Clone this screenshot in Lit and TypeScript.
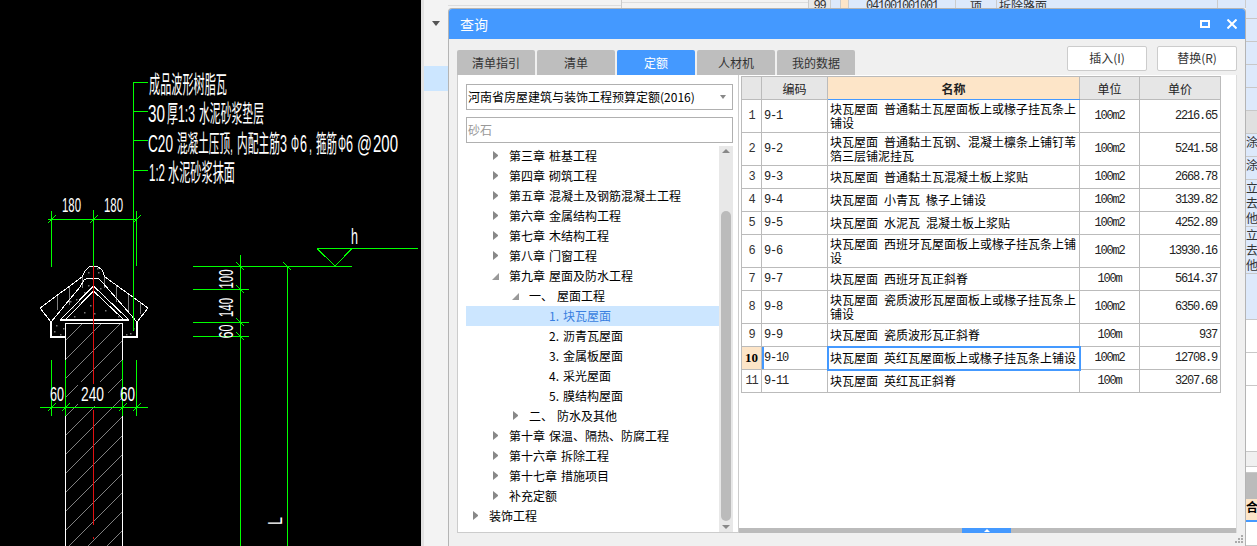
import { LitElement, html, svg, css } from 'lit';
import { customElement } from 'lit/decorators.js';

const GREEN = '#00ff00';

type Seg = [number, number, number, number];

const greenLines: Seg[] = [
  // leader
  [133.5, 82, 133.5, 331], [133.5, 82.5, 148, 82.5], [133.5, 111.5, 148, 111.5],
  [133.5, 140.5, 148, 140.5], [133.5, 170.5, 148, 170.5],
  // top dimension
  [48, 219.5, 137, 219.5], [51.5, 211, 51.5, 267], [93.5, 210, 93.5, 266], [136.5, 211, 136.5, 266],
  // bottom dimension
  [40, 407.5, 148, 407.5], [51.5, 360, 51.5, 416], [65.5, 360, 65.5, 416],
  [122.5, 360, 122.5, 416], [136.5, 360, 136.5, 416],
  // elevation lines
  [193, 266.5, 352, 266.5], [193, 289.5, 249, 289.5], [193, 322.5, 249, 322.5], [193, 336.5, 249, 336.5],
  [240.5, 255, 240.5, 546], [287.5, 266, 287.5, 546],
  [317, 248.5, 418, 248.5], [317, 248.5, 335, 266], [335, 266, 352, 248.5],
];

const slashTicks: [number, number][] = [[51.5, 219.5], [93.5, 219.5], [136.5, 219.5], [51.5, 407.5], [65.5, 407.5], [122.5, 407.5], [136.5, 407.5]];
const backTicks: [number, number][] = [[240.5, 266.5], [240.5, 289.5], [240.5, 322.5], [240.5, 336.5], [287.5, 266.5]];

const tileStrokes: Seg[] = [
  [57, 295, 57, 310], [69, 287, 69, 305], [82, 277, 82, 288], [104, 277, 104, 288],
  [116.5, 285, 116.5, 302], [128, 295, 128, 312], [140.5, 302, 140.5, 314],
];

const speckle: [number, number][] = [
  [70, 301], [76, 299], [72, 307], [79, 303], [84, 292], [88, 285], [95, 292], [100, 288], [104, 296], [110, 302],
  [113, 309], [105, 310], [90, 305], [84, 312], [74, 316], [94, 313], [118, 316], [56, 325], [54, 331], [60, 334],
  [63, 328], [130, 333], [133, 328], [126, 334], [92, 278], [98, 272], [88, 272], [97, 268],
];

// note lines, split up because the CAD font spaces latin and hanzi unevenly: [x, width, text]
const notes: { cy: number; parts: [number, number, string][] }[] = [
  { cy: 84, parts: [[149, 78, '成品波形树脂瓦']] },
  { cy: 113.5, parts: [[148, 17, '30'], [167, 11, '厚'], [178, 17, '1:3'], [199, 65, '水泥砂浆垫层']] },
  { cy: 143, parts: [[148, 25, 'C20'], [177, 56, '混凝土压顶,'], [237, 43, '内配主筋'], [280, 7, '3'], [291, 8, 'Φ'], [300, 7, '6'], [309, 3, ','], [316, 21, '箍筋'], [338, 8, 'Φ'], [346, 7, '6'], [357, 15, '@'], [373, 25, '200']] },
  { cy: 172, parts: [[149, 16, '1:2'], [168, 67, '水泥砂浆抹面']] },
];

@customElement('cad-drawing')
export class CadDrawing extends LitElement {
  static styles = css`
    :host { display: block; width: 421px; height: 546px; flex: none; background: #000; }
    svg { display: block; }
    text { fill: #fff; font-family: "Liberation Sans", "Noto Sans CJK SC", sans-serif; dominant-baseline: central; }
  `;

  label(x: number, cy: number, w: number, size: number, str: string, rotate = false) {
    // squeezed to the measured width, CAD text is narrow
    const t = rotate ? `rotate(-90 ${x + w / 2} ${cy})` : '';
    return svg`<text x=${x} y=${cy} font-size=${size} textLength=${w} lengthAdjust="spacingAndGlyphs" transform=${t}>${str}</text>`;
  }

  render() {
    const hatch = [];
    for (let c = 340; c < 640; c += 19) hatch.push(svg`<line x1="66" y1=${c} x2="122" y2=${c - 56} />`);
    return html`<svg width="421" height="546" viewBox="0 0 421 546">
      <defs><clipPath id="wall"><rect x="66" y="323" width="56" height="223" /></clipPath></defs>
      <g clip-path="url(#wall)" stroke="#808080" shape-rendering="crispEdges">${hatch}</g>
      <rect x="78" y="382" width="30" height="24" fill="#000" />
      <g stroke="#808080" shape-rendering="crispEdges">
        ${tileStrokes.map(s => svg`<line x1=${s[0]} y1=${s[1]} x2=${s[2]} y2=${s[3]} />`)}
      </g>
      <g fill="#777">${speckle.map(p => svg`<rect x=${p[0]} y=${p[1]} width="1.5" height="1.5" />`)}</g>
      <g fill="none" stroke="#fff" shape-rendering="crispEdges">
        <polyline points="51,322 40,308 82,277 85,271 90,266 97,266 102,270 105,277 148,308 137,322" />
        <polyline points="51,322 80,287 84,280 88,278 98,278 103,283 137,322" />
        <polyline points="61,319 93.5,286 128,319" />
        <polyline points="66,319 93.5,291 123,319" />
        <polyline points="66,323 122.5,323" />
        <line x1="65.5" y1="323" x2="65.5" y2="546" />
        <line x1="122.5" y1="323" x2="122.5" y2="546" />
      </g>
      <g fill="none" stroke="#fff" stroke-width="2" shape-rendering="crispEdges">
        <line x1="60" y1="320" x2="129" y2="320" />
        <polyline points="51,322 51,336.5 65,336.5" />
        <polyline points="123,336.5 137,336.5 137,322" />
      </g>
      <g stroke="#e01010" shape-rendering="crispEdges">
        <line x1="93.5" y1="266" x2="93.5" y2="384" />
        <line x1="93.5" y1="410" x2="93.5" y2="525" />
        <line x1="93.5" y1="537" x2="93.5" y2="539" />
      </g>
      <g stroke=${GREEN} shape-rendering="crispEdges">
        ${greenLines.map(s => svg`<line x1=${s[0]} y1=${s[1]} x2=${s[2]} y2=${s[3]} />`)}
        ${slashTicks.map(p => svg`<line x1=${p[0] - 4} y1=${p[1] + 4} x2=${p[0] + 4} y2=${p[1] - 4} />`)}
        ${backTicks.map(p => svg`<line x1=${p[0] - 4} y1=${p[1] - 4} x2=${p[0] + 4} y2=${p[1] + 4} />`)}
      </g>
      ${notes.map(n => n.parts.map(p => this.label(p[0], n.cy, p[1], 24, p[2])))}
      ${this.label(62, 204, 19, 21, '180')}
      ${this.label(104, 204, 19, 21, '180')}
      ${this.label(50, 393, 14, 21, '60')}
      ${this.label(81, 393, 23, 21, '240')}
      ${this.label(120, 393, 15, 21, '60')}
      ${this.label(351, 236, 7, 22, 'h')}
      ${this.label(216, 279, 19, 21, '100', true)}
      ${this.label(216, 307.5, 19, 21, '140', true)}
      ${this.label(218.5, 331.5, 14, 21, '60', true)}
      ${this.label(270, 521, 8, 21, 'L', true)}
    </svg>`;
  }
}

type TreeNode = { depth: number; label: string; state?: 'open' | 'closed'; selected?: boolean };

const tree: TreeNode[] = [
  { depth: 1, label: '第三章 桩基工程', state: 'closed' },
  { depth: 1, label: '第四章 砌筑工程', state: 'closed' },
  { depth: 1, label: '第五章 混凝土及钢筋混凝土工程', state: 'closed' },
  { depth: 1, label: '第六章 金属结构工程', state: 'closed' },
  { depth: 1, label: '第七章 木结构工程', state: 'closed' },
  { depth: 1, label: '第八章 门窗工程', state: 'closed' },
  { depth: 1, label: '第九章 屋面及防水工程', state: 'open' },
  { depth: 2, label: '一、 屋面工程', state: 'open' },
  { depth: 3, label: '1. 块瓦屋面', selected: true },
  { depth: 3, label: '2. 沥青瓦屋面' },
  { depth: 3, label: '3. 金属板屋面' },
  { depth: 3, label: '4. 采光屋面' },
  { depth: 3, label: '5. 膜结构屋面' },
  { depth: 2, label: '二、 防水及其他', state: 'closed' },
  { depth: 1, label: '第十章 保温、隔热、防腐工程', state: 'closed' },
  { depth: 1, label: '第十六章 拆除工程', state: 'closed' },
  { depth: 1, label: '第十七章 措施项目', state: 'closed' },
  { depth: 1, label: '补充定额', state: 'closed' },
  { depth: 0, label: '装饰工程', state: 'closed' },
];

const rows = [
  { code: '9-1', name: '块瓦屋面 普通黏土瓦屋面板上或椽子挂瓦条上铺设', unit: '100m2', price: '2216.65', h: 33 },
  { code: '9-2', name: '块瓦屋面 普通黏土瓦钢、混凝土檩条上铺钉苇箔三层铺泥挂瓦', unit: '100m2', price: '5241.58', h: 33 },
  { code: '9-3', name: '块瓦屋面 普通黏土瓦混凝土板上浆贴', unit: '100m2', price: '2668.78', h: 23 },
  { code: '9-4', name: '块瓦屋面 小青瓦 椽子上铺设', unit: '100m2', price: '3139.82', h: 23 },
  { code: '9-5', name: '块瓦屋面 水泥瓦 混凝土板上浆贴', unit: '100m2', price: '4252.89', h: 23 },
  { code: '9-6', name: '块瓦屋面 西班牙瓦屋面板上或椽子挂瓦条上铺设', unit: '100m2', price: '13930.16', h: 33 },
  { code: '9-7', name: '块瓦屋面 西班牙瓦正斜脊', unit: '100m', price: '5614.37', h: 23 },
  { code: '9-8', name: '块瓦屋面 瓷质波形瓦屋面板上或椽子挂瓦条上铺设', unit: '100m2', price: '6350.69', h: 33 },
  { code: '9-9', name: '块瓦屋面 瓷质波形瓦正斜脊', unit: '100m', price: '937', h: 23 },
  { code: '9-10', name: '块瓦屋面 英红瓦屋面板上或椽子挂瓦条上铺设', unit: '100m2', price: '12708.9', h: 23 },
  { code: '9-11', name: '块瓦屋面 英红瓦正斜脊', unit: '100m', price: '3207.68', h: 23 },
];

const ACTIVE_ROW = 9;

@customElement('query-dialog')
export class QueryDialog extends LitElement {
  static styles = css`
    :host {
      position: absolute; left: 448px; top: 8px; width: 798px; height: 538px; box-sizing: border-box;
      display: flex; flex-direction: column; overflow: hidden;
      border: 1px solid #b4b4b4; border-bottom: 0; border-radius: 4px 4px 0 0; background: #f0f0f0;
      font: 12px "Noto Sans CJK SC", "Liberation Sans", sans-serif; color: #000;
    }
    .title { flex: none; height: 30px; background: #4499ff; color: #fff; display: flex; align-items: center; padding: 0 8px 0 11px; font-size: 14px; }
    .title span { flex: 1; }
    .max { width: 6px; height: 4px; border: 2px solid #fff; margin-right: 17px; }
    .close { display: block; }
    .body { flex: 1; min-height: 0; display: flex; flex-direction: column; padding: 0 8px; }
    .bar { flex: none; height: 36px; display: flex; justify-content: space-between; }
    .tabs { display: flex; gap: 2px; align-items: flex-end; }
    .tab { width: 78px; height: 25px; line-height: 25px; text-align: center; background: #bebebe; color: #333; border-radius: 2px 2px 0 0; }
    .tab.on { background: #4499ff; color: #fff; }
    .btns { display: flex; gap: 10px; padding-top: 7px; }
    .btn { width: 80px; height: 25px; box-sizing: border-box; line-height: 22px; text-align: center; background: #fff; border: 1px solid #ccc; border-radius: 2px; color: #333; }
    .panes { height: 458px; flex: none; display: flex; }
    .left { width: 282px; flex: none; box-sizing: border-box; background: #fff; border: 1px solid #ccc; border-top: 0; padding: 9px 5px 0 8px; display: flex; flex-direction: column; }
    .select, .search { height: 26px; box-sizing: border-box; border: 1px solid #b0b0b0; display: flex; align-items: center; padding-left: 1px; padding-bottom: 1px; flex: none; }
    .select { justify-content: space-between; padding-right: 6px; }
    .select i { border: 3px solid transparent; border-top: 4px solid #888; border-bottom: 0; }
    .search { margin-top: 7px; color: #999; }
    .tree-wrap { flex: 1; min-height: 0; display: flex; margin-top: 3px; }
    .tree { flex: 1; min-width: 0; }
    .node { height: 20px; box-sizing: border-box; padding-bottom: 2px; display: flex; align-items: center; white-space: pre; word-spacing: 1.3px; }
    .node.sel { background: #cce6ff; color: #3a7fe0; }
    .d0 { padding-left: 7px; } .d1 { padding-left: 27px; } .d2 { padding-left: 47px; } .d3 { padding-left: 67px; }
    .arrow { width: 5px; height: 9px; margin-right: 11px; flex: none; box-sizing: border-box; }
    .arrow.closed { border-left: 5px solid #888; border-top: 4.5px solid transparent; border-bottom: 4.5px solid transparent; }
    .arrow.open { position: relative; }
    .arrow.open::before { content: ""; position: absolute; right: -1px; bottom: 0; border-right: 7px solid #999; border-top: 7px solid transparent; }
    .scroll { width: 14px; flex: none; background: #e8e8e8; display: flex; flex-direction: column; align-items: center; padding-bottom: 3px; }
    .up { border: 4px solid transparent; border-bottom: 4px solid #888; border-top: 0; margin-top: 3px; }
    .thumb { width: 10px; height: 310px; background: #bbb; border-radius: 5px; margin-top: 58px; }
    .down { border: 4px solid transparent; border-top: 4px solid #888; border-bottom: 0; margin-top: 4px; }
    .right { flex: 1; min-width: 0; background: #fff; display: flex; flex-direction: column; padding-top: 1px; border-right: 1px solid #ddd; }
    .grid-area { flex: 1; min-height: 0; padding-left: 2px; }
    table { border-collapse: collapse; table-layout: fixed; width: 480px; }
    th, td { border: 1px solid #bbb; padding: 0; overflow: hidden; }
    th { background: #e6e6e6; font-weight: 400; color: #222; height: 22px; }
    th.key { background: #fde5c8; font-weight: 700; border-bottom-color: #4499ff; }
    td { line-height: 14px; }
    .num { font-family: "Liberation Mono", monospace; font-size: 12px; letter-spacing: -1.2px; color: #222; }
    .idx { text-align: center; color: #333; }
    .idx.on { background: #fde5c8; color: #000; font: 700 13px "Liberation Serif", serif; letter-spacing: 0; }
    .code { padding-left: 2px; }
    .code.on { box-shadow: inset 2px 0 0 #4499ff; }
    .name { padding: 0 2px; word-spacing: 3.3px; }
    .name.on { outline: 2px solid #4499ff; outline-offset: -1px; }
    .unit { text-align: center; }
    .price { text-align: right; padding-right: 3px; }
    .split { flex: none; height: 5px; background: #bbb; display: flex; padding-left: 223px; }
    .handle { width: 49px; background: #4499ff; display: flex; justify-content: center; align-items: center; }
    .handle i { border: 3px solid transparent; border-bottom: 3px solid #fff; border-top: 0; }
    .grip { position: absolute; right: 2px; bottom: 3px; color: #aaa; }
  `;

  render() {
    return html`
      <div class="title">
        <span>查询</span>
        <div class="max"></div>
        <svg class="close" width="10" height="10" viewBox="0 0 10 10"><path d="M0.5 0.5 L9.5 9.5 M9.5 0.5 L0.5 9.5" stroke="#fff" stroke-width="2" /></svg>
      </div>
      <div class="body">
        <div class="bar">
          <div class="tabs">
            ${['清单指引', '清单', '定额', '人材机', '我的数据'].map((t, i) => html`<div class="tab ${i === 2 ? 'on' : ''}">${t}</div>`)}
          </div>
          <div class="btns"><div class="btn">插入(I)</div><div class="btn">替换(R)</div></div>
        </div>
        <div class="panes">
          <div class="left">
            <div class="select"><span>河南省房屋建筑与装饰工程预算定额(2016)</span><i></i></div>
            <div class="search">砂石</div>
            <div class="tree-wrap">
              <div class="tree">
                ${tree.map(n => html`
                  <div class="node d${n.depth} ${n.selected ? 'sel' : ''}"><span class="arrow ${n.state ?? ''}"></span>${n.label}</div>`)}
              </div>
              <div class="scroll"><div class="up"></div><div class="thumb"></div><div class="down"></div></div>
            </div>
          </div>
          <div class="right">
            <div class="grid-area">
              <table>
                <colgroup><col style="width:20px" /><col style="width:66px" /><col style="width:252px" /><col style="width:60px" /><col style="width:81px" /></colgroup>
                <thead><tr><th></th><th>编码</th><th class="key">名称</th><th>单位</th><th>单价</th></tr></thead>
                <tbody>
                  ${rows.map((r, i) => html`
                    <tr style="height:${r.h}px">
                      <td class="idx num ${i === ACTIVE_ROW ? 'on' : ''}">${i + 1}</td>
                      <td class="code num ${i === ACTIVE_ROW ? 'on' : ''}">${r.code}</td>
                      <td class="name ${i === ACTIVE_ROW ? 'on' : ''}">${r.name}</td>
                      <td class="unit num">${r.unit}</td>
                      <td class="price num">${r.price}</td>
                    </tr>`)}
                </tbody>
              </table>
            </div>
            <div class="split"><div class="handle"><i></i></div></div>
          </div>
        </div>
      </div>
      <svg class="grip" width="8" height="8" viewBox="0 0 8 8" fill="#aaa">
        <rect x="6" y="0" width="2" height="2" /><rect x="3" y="3" width="2" height="2" /><rect x="6" y="3" width="2" height="2" />
        <rect x="0" y="6" width="2" height="2" /><rect x="3" y="6" width="2" height="2" /><rect x="6" y="6" width="2" height="2" />
      </svg>
    `;
  }
}

const stripRows = [
  { h: 19, c: 'b' }, { h: 23, c: 'b' }, { h: 23, c: 'b' }, { h: 23, c: 'b' }, { h: 23, c: 'b' },
  { h: 23, c: 'g' }, { h: 23, c: 'b', t: '涂' }, { h: 23, c: 'b', t: '涂' },
  { h: 47, c: 'b', t: '立去他' }, { h: 47, c: 'b', t: '立去他' }, { h: 46, c: 'b' },
  { h: 33, c: 'w' }, { h: 33, c: 'w' }, { h: 66, c: 'w' }, { h: 15, c: 'l' }, { h: 6, c: 'w' },
  { h: 26, c: 'd' }, { h: 21, c: 'o', t: '合' }, { h: 2, c: 'x' }, { h: 24, c: 'w' },
];

@customElement('app-root')
export class AppRoot extends LitElement {
  static styles = css`
    :host {
      display: flex; position: relative; width: 1257px; height: 546px; overflow: hidden; background: #f3f3f3;
      font: 12px "Noto Sans CJK SC", "Liberation Sans", sans-serif;
    }
    .side { flex: none; width: 27px; box-sizing: border-box; border-left: 3px solid #e2e2e2; display: flex; flex-direction: column; }
    .side-head { height: 66px; flex: none; box-sizing: border-box; border-top: 1px solid #f3f3f3; display: flex; justify-content: center; padding-top: 15px; }
    .side-head i { width: 0; height: 0; border: 4px solid transparent; border-top: 5px solid #555; border-bottom: 0; margin-top: 5px; }
    .side-sel { height: 25px; flex: none; background: #cce6ff; }
    .mid { flex: none; width: 798px; display: flex; height: 8px; align-items: stretch; overflow: hidden; line-height: 12px; color: #333; }
    .mid div { box-sizing: border-box; border-right: 1px solid #ccc; white-space: nowrap; text-align: center; }
    .mono { font-family: "Liberation Mono", monospace; letter-spacing: -1.2px; }
    .c0 { width: 174px; background: linear-gradient(#f3f3f3 5px, #ddd 5px, #ddd 6px, #f3f3f3 6px); }
    .c1 { width: 187px; background: linear-gradient(#f3f3f3 2px, #ddd 2px, #ddd 3px, #f3f3f3 3px); }
    .c2 { width: 22px; background: #e8e8e8; }
    .c3 { width: 10px; background: #dde9fb; }
    .c4 { width: 8px; background: #fde5c8; }
    .c5 { width: 107px; background: #dde9fb; }
    .c6 { width: 41px; background: #dde9fb; }
    .c7 { width: 221px; background: #dde9fb; text-align: left !important; padding-left: 2px; }
    .c8 { flex: 1; background: #dde9fb; }
    .strip { flex: none; width: 11px; display: flex; flex-direction: column; overflow: hidden; }
    .sr { flex: none; box-sizing: border-box; border-bottom: 1px solid #c8c8c8; line-height: 15px; width: 11px; overflow: hidden; color: #333; word-break: break-all; }
    .sr span { display: block; width: 12px; }
    .b { background: #dde9fb; } .g { background: #e0e0e0; } .w { background: #fff; }
    .l { background: #f0f0f0; } .d { background: #bbb; border: 0; }
    .o { background: #fde5c8; border: 0; font-weight: 700; color: #000; } .x { background: #4499ff; border: 0; }
  `;

  render() {
    return html`
      <cad-drawing></cad-drawing>
      <div class="side">
        <div class="side-head"><i></i></div>
        <div class="side-sel"></div>
      </div>
      <div class="mid">
        <div class="c0"></div><div class="c1"></div><div class="c2 mono">99</div><div class="c3"></div><div class="c4"></div>
        <div class="c5 mono">041001001001</div><div class="c6">项</div><div class="c7">拆除路面</div><div class="c8"></div>
      </div>
      <div class="strip">
        ${stripRows.map(r => html`<div class="sr ${r.c}" style="height:${r.h}px"><span>${r.t ?? ''}</span></div>`)}
      </div>
      <query-dialog></query-dialog>
    `;
  }
}

declare global {
  interface HTMLElementTagNameMap {
    'app-root': AppRoot;
    'cad-drawing': CadDrawing;
    'query-dialog': QueryDialog;
  }
}
